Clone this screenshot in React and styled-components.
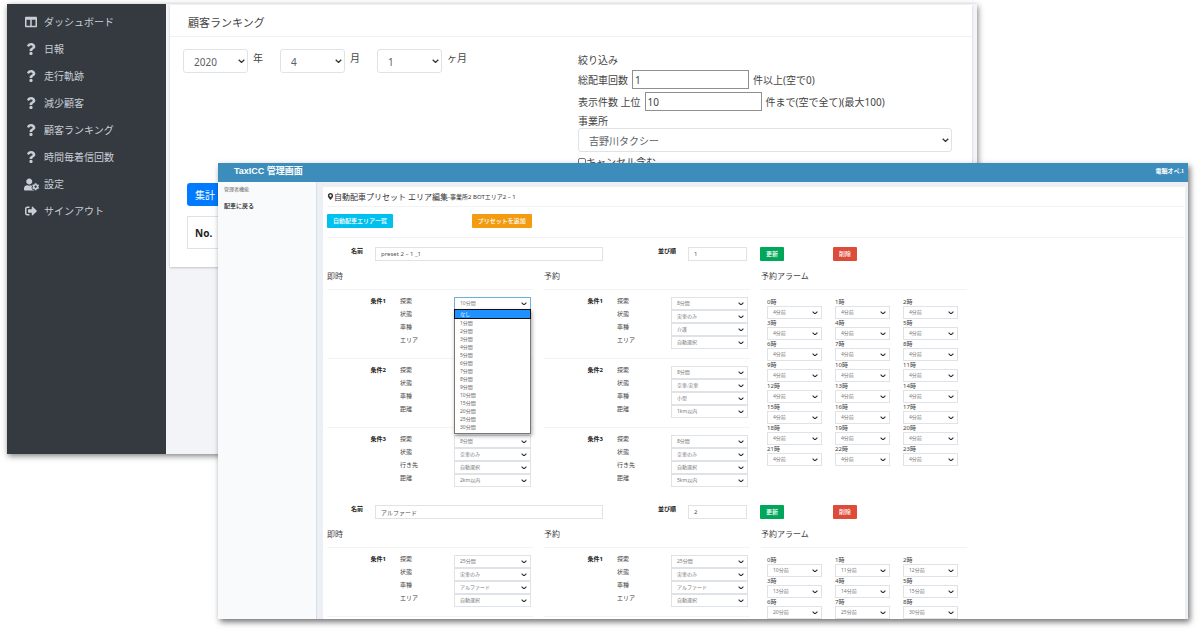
import React from 'react';
import styled, { createGlobalStyle, css } from 'styled-components';
import { FaColumns, FaQuestion, FaUserCog, FaSignOutAlt, FaMapMarkerAlt } from 'react-icons/fa';

const GlobalStyle = createGlobalStyle`
  * { box-sizing: border-box; }
  body {
    margin: 0;
    background: #fff;
    color: #444;
    font-family: "Noto Sans", "Noto Sans CJK JP", sans-serif;
    font-size: 10px;
    line-height: 14px;
  }
  button, input, select { font: inherit; color: inherit; margin: 0; }
  h1, h2, h3, ul, fieldset { margin: 0; padding: 0; border: 0; font-weight: 400; }
  ul { list-style: none; }
`;

const Stage = styled.div`
  position: relative;
  min-height: 100vh;
  padding: 4px 223px 0 7px;
  overflow: hidden;
`;

/* ---------- shared controls ---------- */

const SelectBox = styled.span`
  display: grid;
  align-items: center;
  width: 100%;
  > * { grid-area: 1 / 1; }
  > svg { justify-self: end; pointer-events: none; }
`;

const largeSelect = css`
  height: 24px;
  padding: 2px 20px 0 10px;
  border: 1px solid #dfe2e6;
  border-radius: 3px;
  color: #5a6067;
  & + svg { width: 7px; margin-right: 3px; }
`;

const smallSelect = css`
  height: 13px;
  padding: 0 12px 0 5px;
  border: 1px solid ${(p) => (p.$active ? '#6fb0d8' : '#dfe2e7')};
  border-radius: 0;
  color: #777;
  font-size: 5px;
  line-height: 11px;
  & + svg { width: 6px; margin-right: 4px; }
`;

const NativeSelect = styled.select`
  appearance: none;
  width: 100%;
  min-width: 0;
  background: #fff;
  ${(p) => (p.$small ? smallSelect : largeSelect)}
`;

function Select({ value, small, active, ...rest }) {
  return (
    <SelectBox>
      <NativeSelect $small={small} $active={active} defaultValue={value} {...rest}>
        <option>{value}</option>
      </NativeSelect>
      <svg viewBox="0 0 10 6" aria-hidden="true">
        <path d="M1 1l4 4 4-4" fill="none" stroke="#333" strokeWidth="1.8" />
      </svg>
    </SelectBox>
  );
}

/* ---------- ranking window ---------- */

const RankingWindow = styled.section`
  display: flex;
  min-height: 450px;
  background: #f3f4f7;
  box-shadow: 1px 2px 6px rgba(0, 0, 0, 0.5);
`;

const DarkSidebar = styled.nav`
  flex: 0 0 159px;
  padding: 8px 0 0 15px;
  background: #343a40;
  color: #c9ced6;
`;

const DarkMenu = styled.ul`
  display: flex;
  flex-direction: column;
  gap: 7px;
`;

const DarkLink = styled.a`
  display: grid;
  grid-template-columns: 18px 1fr;
  align-items: center;
  column-gap: 4px;
  height: 20px;
  color: inherit;
  text-decoration: none;
  svg { justify-self: center; }
`;

const RankingCard = styled.div`
  flex: 1;
  align-self: flex-start;
  margin: 1px 5px 0 4px;
  padding-bottom: 18px;
  background: #fff;
  box-shadow: 0 1px 2px rgba(0, 0, 0, 0.2);
`;

const RankingTitle = styled.h1`
  height: 32px;
  padding-left: 18px;
  border-bottom: 1px solid #f0f1f2;
  font-size: 11px;
  line-height: 36px;
`;

const RankingFilters = styled.form`
  display: grid;
  grid-template-columns: 1fr 1fr;
  padding: 12px 0 14px;
`;

const PeriodRow = styled.div`
  display: grid;
  grid-template-columns: repeat(4, 1fr);
  align-items: start;
  padding-left: 13px;
`;

const PeriodField = styled.label`
  display: grid;
  grid-template-columns: 65px 1fr;
  column-gap: 5px;
  white-space: nowrap;
`;

const PeriodUnit = styled.span`
  padding-top: 2px;
`;

const Narrowing = styled.div`
  display: flex;
  flex-direction: column;
  gap: 3px;
  padding: 4px 20px 0 7px;
`;

const InlineField = styled.label`
  display: flex;
  align-items: center;
  gap: 4px;
  white-space: nowrap;
`;

const NumberInput = styled.input`
  width: 117px;
  height: 19px;
  padding: 0 2px;
  border: 1px solid #8f8f8f;
  background: #fff;
`;

const OfficeField = styled.label`
  display: flex;
  flex-direction: column;
`;

const Checkbox = styled.input`
  appearance: none;
  width: 8px;
  height: 8px;
  border: 1px solid #777;
  border-radius: 2px;
`;

const CheckField = styled.label`
  display: flex;
  align-items: center;
`;

const RankingResults = styled.div`
  padding: 0 17px;
`;

const SumButton = styled.button`
  height: 23px;
  padding: 0 8px;
  border: 0;
  border-radius: 3px;
  background: #007bff;
  color: #fff;
`;

const RankingTable = styled.table`
  width: 100%;
  margin-top: 10px;
  border-collapse: collapse;
  th {
    height: 32px;
    padding: 0 7px;
    border: 1px solid #dee2e6;
    color: #222;
    font-weight: 700;
    text-align: left;
  }
`;

const menu = [
  { label: 'ダッシュボード', icon: FaColumns, size: 12 },
  { label: '日報', icon: FaQuestion, size: 12 },
  { label: '走行軌跡', icon: FaQuestion, size: 12 },
  { label: '減少顧客', icon: FaQuestion, size: 12 },
  { label: '顧客ランキング', icon: FaQuestion, size: 12 },
  { label: '時間毎着信回数', icon: FaQuestion, size: 12 },
  { label: '設定', icon: FaUserCog, size: 15 },
  { label: 'サインアウト', icon: FaSignOutAlt, size: 12 },
];

const periods = [
  { value: '2020', unit: '年' },
  { value: '4', unit: '月' },
  { value: '1', unit: 'ヶ月' },
];

function Ranking() {
  return (
    <RankingWindow>
      <DarkSidebar>
        <DarkMenu>
          {menu.map(({ label, icon: Icon, size }) => (
            <li key={label}>
              <DarkLink href="#">
                <Icon size={size} />
                {label}
              </DarkLink>
            </li>
          ))}
        </DarkMenu>
      </DarkSidebar>
      <RankingCard>
        <RankingTitle>顧客ランキング</RankingTitle>
        <RankingFilters>
          <PeriodRow>
            {periods.map((p) => (
              <PeriodField key={p.unit}>
                <Select value={p.value} />
                <PeriodUnit>{p.unit}</PeriodUnit>
              </PeriodField>
            ))}
          </PeriodRow>
          <Narrowing>
            <span>絞り込み</span>
            <InlineField>
              総配車回数
              <NumberInput defaultValue="1" />
              件以上(空で0)
            </InlineField>
            <InlineField>
              表示件数 上位
              <NumberInput defaultValue="10" />
              件まで(空で全て)(最大100)
            </InlineField>
            <OfficeField>
              事業所
              <Select value="吉野川タクシー" />
            </OfficeField>
            <CheckField>
              <Checkbox type="checkbox" />
              キャンセル含む
            </CheckField>
          </Narrowing>
        </RankingFilters>
        <RankingResults>
          <SumButton type="button">集計</SumButton>
          <RankingTable>
            <thead>
              <tr>
                <th scope="col">No.</th>
              </tr>
            </thead>
          </RankingTable>
        </RankingResults>
      </RankingCard>
    </RankingWindow>
  );
}

/* ---------- preset window ---------- */

const PresetWindow = styled.section`
  position: absolute;
  inset: 163px 12px 12px 218px;
  display: flex;
  flex-direction: column;
  overflow: hidden;
  background: #ecf0f5;
  box-shadow: 2px 3px 6px rgba(0, 0, 0, 0.55);
  font-size: 6px;
  line-height: 8px;
`;

const TopBar = styled.header`
  flex: 0 0 19px;
  display: flex;
  justify-content: space-between;
  align-items: center;
  padding: 0 4px 3px 16px;
  background: #3c8dbc;
  color: #fff;
`;

const Brand = styled.h1`
  font-family: "Liberation Sans", "Noto Sans CJK JP", sans-serif;
  font-size: 9px;
  font-weight: 700;
  line-height: 12px;
`;

const UserName = styled.span`
  font-family: "Liberation Serif", "Noto Sans CJK JP", serif;
  font-weight: 700;
`;

const PresetBody = styled.div`
  display: flex;
  flex: 1;
  min-height: 0;
`;

const LightSidebar = styled.nav`
  flex: 0 0 99px;
  padding: 3px 6px;
  border-right: 1px solid #d8dfe8;
  background: #f9fafc;
`;

const SideCaption = styled.p`
  margin: 0 0 9px;
  color: #666;
  font-size: 5px;
`;

const BackLink = styled.a`
  color: #222;
  font-weight: 500;
  text-decoration: none;
`;

const PresetCard = styled.main`
  flex: 1;
  align-self: flex-start;
  margin: 5px 3px 0 6px;
  padding: 0 1px 0 4px;
  background: #fff;
`;

const PresetTitle = styled.h2`
  display: flex;
  align-items: center;
  height: 20px;
  border-bottom: 1px solid #f3f3f3;
  color: #333;
  font-size: 8px;
  line-height: 12px;
  small { font-size: 6px; }
`;

const Toolbar = styled.div`
  display: grid;
  grid-template-columns: repeat(6, 1fr);
  column-gap: 11px;
  justify-items: start;
  padding: 7px 0 9px;
  border-bottom: 1px solid #f3f3f3;
`;

const tones = {
  info: '#00c0ef',
  warning: '#f39c12',
  success: '#00a65a',
  danger: '#dd4b39',
};

const ActionButton = styled.button`
  justify-self: start;
  height: 14px;
  padding: 0 6px;
  border: 0;
  border-radius: 1px;
  background: ${(p) => tones[p.$tone]};
  color: #fff;
  font-weight: 500;
  white-space: nowrap;
`;

const PresetForm = styled.form`
  padding-top: 9px;
`;

const PresetHead = styled.div`
  display: grid;
  grid-template-columns: 48fr 228fr 85fr 72fr 73fr 351fr;
`;

const HeadLabel = styled.label`
  padding-right: 12px;
  color: #222;
  font-weight: 700;
  text-align: right;
`;

const HeadInput = styled.input`
  width: 100%;
  min-width: 0;
  height: 14px;
  padding: 0 5px;
  border: 1px solid #dfe2e7;
  color: #555;
`;

const OrderCell = styled.div`
  display: flex;
  padding-right: 13px;
`;

const Columns = styled.div`
  display: grid;
  grid-template-columns: repeat(4, minmax(0, 1fr));
  column-gap: 11px;
`;

const ColumnTitle = styled.h3`
  padding: 9px 0 7px;
  font-size: 8px;
  line-height: 12px;
`;

const ConditionGroup = styled.fieldset`
  display: grid;
  grid-template-columns: 59fr 147fr;
  min-width: 0;
  padding: 7px 0 9px;
  border-top: 1px solid #f3f3f3;
  border-bottom: ${(p) => (p.$closed ? '1px solid #f3f3f3' : '0')};
`;

const ConditionName = styled.span`
  color: #222;
  font-weight: 700;
  text-align: right;
`;

const ConditionRow = styled.label`
  position: relative;
  display: grid;
  grid-template-columns: 54fr 77fr;
  padding: 0 2px 0 14px;
`;

const OptionList = styled.ul`
  position: absolute;
  z-index: 1;
  top: 12px;
  right: 2px;
  width: 77px;
  padding-bottom: 2px;
  border: 1px solid #777;
  background: #fff;
  box-shadow: 1px 2px 4px rgba(0, 0, 0, 0.35);
  font-size: 5px;
`;

const Option = styled.li`
  padding-left: 5px;
  color: #666;
  ${(p) =>
    p.$selected &&
    css`
      outline: 1px solid #111;
      margin-bottom: 1px;
      background: #1e90ff;
      color: #fff;
    `}
`;

const AlarmGrid = styled.div`
  display: grid;
  grid-template-columns: repeat(3, 1fr);
  column-gap: 13px;
  padding: 8px 9px 8px 6px;
  border-top: 1px solid #f3f3f3;
`;

const AlarmField = styled.label`
  display: flex;
  flex-direction: column;
`;

const durations = ['なし', '1分間', '2分間', '3分間', '4分間', '5分間', '6分間', '7分間', '8分間', '9分間', '10分間', '15分間', '20分間', '25分間', '30分間'];

const byArea = ['探索', '状態', '車種', 'エリア'];
const byDistance = ['探索', '状態', '車種', '距離'];
const byDestination = ['探索', '状態', '行き先', '距離'];

const presets = [
  {
    name: 'preset 2 – 1 _1',
    order: '1',
    now: [
      { labels: byArea, values: ['10分間', '実車のみ', '介護', '自動選択'], open: true },
      { labels: byDistance, values: ['8分間', '空車,実車', '小型', '1km以内'] },
      { labels: byDestination, values: ['8分間', '空車のみ', '自動選択', '2km以内'] },
    ],
    reserved: [
      { labels: byArea, values: ['8分間', '実車のみ', '介護', '自動選択'] },
      { labels: byDistance, values: ['8分間', '空車,実車', '小型', '1km以内'] },
      { labels: byDestination, values: ['8分間', '空車のみ', '自動選択', '5km以内'] },
    ],
    alarms: Array(24).fill('4分前'),
  },
  {
    name: 'アルファード',
    order: '2',
    now: [{ labels: byArea, values: ['25分間', '実車のみ', 'アルファード', '自動選択'], closed: true }],
    reserved: [{ labels: byArea, values: ['25分間', '実車のみ', 'アルファード', '自動選択'], closed: true }],
    alarms: ['10分前', '11分前', '12分前', '13分前', '14分前', '15分前', '20分前', '25分前', '30分前'],
  },
];

function ConditionColumn({ title, groups }) {
  return (
    <div>
      <ColumnTitle>{title}</ColumnTitle>
      {groups.map((group, g) => (
        <ConditionGroup key={g} $closed={group.closed} aria-label={`条件${g + 1}`}>
          <ConditionName>条件{g + 1}</ConditionName>
          <div>
            {group.labels.map((label, i) => {
              const open = group.open && i === 0;
              return (
                <ConditionRow key={label}>
                  <span>{label}</span>
                  <Select small active={open} value={group.values[i]} />
                  {open && (
                    <OptionList role="listbox" aria-label={label}>
                      {durations.map((d, n) => (
                        <Option key={d} role="option" aria-selected={n === 0} $selected={n === 0}>
                          {d}
                        </Option>
                      ))}
                    </OptionList>
                  )}
                </ConditionRow>
              );
            })}
          </div>
        </ConditionGroup>
      ))}
    </div>
  );
}

function Preset({ preset }) {
  const nameId = `name-${preset.order}`;
  const orderId = `order-${preset.order}`;
  return (
    <PresetForm>
      <PresetHead>
        <HeadLabel htmlFor={nameId}>名前</HeadLabel>
        <HeadInput id={nameId} defaultValue={preset.name} />
        <HeadLabel htmlFor={orderId}>並び順</HeadLabel>
        <OrderCell>
          <HeadInput id={orderId} defaultValue={preset.order} />
        </OrderCell>
        <ActionButton type="button" $tone="success">更新</ActionButton>
        <ActionButton type="button" $tone="danger">削除</ActionButton>
      </PresetHead>
      <Columns>
        <ConditionColumn title="即時" groups={preset.now} />
        <ConditionColumn title="予約" groups={preset.reserved} />
        <div>
          <ColumnTitle>予約アラーム</ColumnTitle>
          <AlarmGrid>
            {preset.alarms.map((value, hour) => (
              <AlarmField key={hour}>
                {hour}時
                <Select small value={value} />
              </AlarmField>
            ))}
          </AlarmGrid>
        </div>
      </Columns>
    </PresetForm>
  );
}

function PresetEditor() {
  return (
    <PresetWindow>
      <TopBar>
        <Brand>TaxICC 管理画面</Brand>
        <UserName>電脳オペ.1</UserName>
      </TopBar>
      <PresetBody>
        <LightSidebar>
          <SideCaption>管理者機能</SideCaption>
          <BackLink href="#">配車に戻る</BackLink>
        </LightSidebar>
        <PresetCard>
          <PresetTitle>
            <FaMapMarkerAlt size={7} />
            <span>自動配車プリセット エリア編集</span>
            <small>-事業所2 BOTエリア2 – 1</small>
          </PresetTitle>
          <Toolbar>
            <ActionButton type="button" $tone="info">自動配車エリア一覧</ActionButton>
            <ActionButton type="button" $tone="warning">プリセットを追加</ActionButton>
          </Toolbar>
          {presets.map((p) => (
            <Preset key={p.order} preset={p} />
          ))}
        </PresetCard>
      </PresetBody>
    </PresetWindow>
  );
}

export default function App() {
  return (
    <>
      <GlobalStyle />
      <Stage>
        <Ranking />
        <PresetEditor />
      </Stage>
    </>
  );
}
